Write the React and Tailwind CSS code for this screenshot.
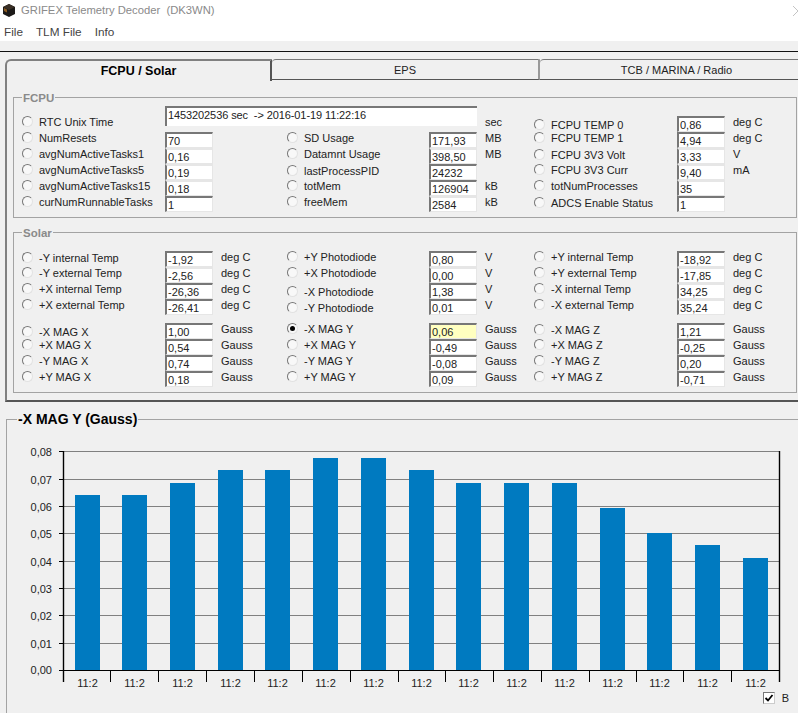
import React from 'react';

const bars = [
  [75, 495], [122, 495], [170, 483], [218, 470], [265, 470],
  [313, 458], [361, 458], [409, 470], [456, 483], [504, 483],
  [552, 483], [600, 508], [647, 533], [695, 545], [743, 558],
];
const gridY = [451.5, 479.5, 506.5, 533.5, 561.5, 588.5, 615.5, 643.5];
const ticksX = [63, 110, 158, 206, 254, 302, 350, 398, 445, 493, 541, 589, 636, 683, 731, 779];

const fcpu1 = [
  { label: 'NumResets', value: '70' },
  { label: 'avgNumActiveTasks1', value: '0,16', flat: true },
  { label: 'avgNumActiveTasks5', value: '0,19', flat: true },
  { label: 'avgNumActiveTasks15', value: '0,18', flat: true },
  { label: 'curNumRunnableTasks', value: '1' },
];
const fcpu2 = [
  { label: 'SD Usage', value: '171,93', unit: 'MB' },
  { label: 'Datamnt Usage', value: '398,50', unit: 'MB', flat: true },
  { label: 'lastProcessPID', value: '24232', shift: 'mt-px' },
  { label: 'totMem', value: '126904', unit: 'kB' },
  { label: 'freeMem', value: '2584', unit: 'kB', flat: true },
];
const fcpu3 = [
  { label: 'FCPU TEMP 0', value: '0,86', unit: 'deg C', shift: 'mt-[3px]' },
  { label: 'FCPU TEMP 1', value: '4,94', unit: 'deg C' },
  { label: 'FCPU 3V3 Volt', value: '3,33', unit: 'V', shift: 'mt-px', flat: true },
  { label: 'FCPU 3V3 Curr', value: '9,40', unit: 'mA', flat: true },
  { label: 'totNumProcesses', value: '35', flat: true },
  { label: 'ADCS Enable Status', value: '1', shift: 'mt-px' },
];

const temp1 = [
  { label: '-Y internal Temp', value: '-1,92', unit: 'deg C', shift: 'mt-px' },
  { label: '-Y external Temp', value: '-2,56', unit: 'deg C', flat: true },
  { label: '+X internal Temp', value: '-26,36', unit: 'deg C' },
  { label: '+X external Temp', value: '-26,41', unit: 'deg C' },
];
const temp2 = [
  { label: '+Y Photodiode', value: '0,80', unit: 'V' },
  { label: '+X Photodiode', value: '0,00', unit: 'V', flat: true },
  { label: '-X Photodiode', value: '1,38', unit: 'V', shift: 'mt-[3px]' },
  { label: '-Y Photodiode', value: '0,01', unit: 'V', shift: 'mt-[3px]' },
];
const temp3 = [
  { label: '+Y internal Temp', value: '-18,92', unit: 'deg C' },
  { label: '+Y external Temp', value: '-17,85', unit: 'deg C', flat: true },
  { label: '-X internal Temp', value: '34,25', unit: 'deg C', flat: true },
  { label: '-X external Temp', value: '35,24', unit: 'deg C', flat: true },
];
const mag1 = [
  { label: '-X MAG X', value: '1,00', unit: 'Gauss', shift: 'mt-[3px]' },
  { label: '+X MAG X', value: '0,54', unit: 'Gauss' },
  { label: '-Y MAG X', value: '0,74', unit: 'Gauss' },
  { label: '+Y MAG X', value: '0,18', unit: 'Gauss' },
];
const mag2 = [
  { label: '-X MAG Y', value: '0,06', unit: 'Gauss', checked: true, active: true },
  { label: '+X MAG Y', value: '-0,49', unit: 'Gauss' },
  { label: '-Y MAG Y', value: '-0,08', unit: 'Gauss' },
  { label: '+Y MAG Y', value: '0,09', unit: 'Gauss' },
];
const mag3 = [
  { label: '-X MAG Z', value: '1,21', unit: 'Gauss', shift: 'mt-px' },
  { label: '+X MAG Z', value: '-0,25', unit: 'Gauss' },
  { label: '-Y MAG Z', value: '0,20', unit: 'Gauss' },
  { label: '+Y MAG Z', value: '-0,71', unit: 'Gauss' },
];

const Radio = ({ checked }) => (
  <span className="w-[11px] h-[11px] shrink-0 rounded-full bg-[#f8f8f8] border border-t-[#777] border-l-[#777] border-r-[#e2e2e2] border-b-[#e2e2e2] flex items-center justify-center -translate-y-px">
    {checked && <span className="w-[5px] h-[5px] rounded-full bg-black" />}
  </span>
);

const Choice = ({ label, checked, shift, width }) => (
  <div className={`${width} shrink-0`}>
    <div className={`h-3 flex items-center gap-[6px] ${shift || ''}`}>
      <Radio checked={checked} />
      <span className="leading-[14px] whitespace-nowrap">{label}</span>
    </div>
  </div>
);

const Field = ({ label, value, unit, flat, shift, checked, active, width = 'w-[143px]' }) => (
  <div className="flex h-4">
    <Choice label={label} checked={checked} shift={shift} width={width} />
    <div className={`w-12 h-4 shrink-0 overflow-hidden border-l-2 border-t-2 border-r border-b border-l-[#777] border-r-[#e6e6e6] border-b-[#e6e6e6] leading-[14px] pl-px ${flat ? 'border-t-[#e6e6e6]' : 'border-t-[#777]'} ${active ? 'bg-[#ffffc0]' : 'bg-white'}`}>
      {value}
    </div>
    {unit && <span className="ml-2 leading-[13px]">{unit}</span>}
  </div>
);

const Group = ({ title, className, children }) => (
  <div className={`relative border border-[#a3a3a3] ${className}`}>
    <span className="absolute left-2 -top-2 px-px bg-[#f0f0f0] font-bold text-[11.5px] leading-4 text-[#8a8a8a]">{title}</span>
    {children}
  </div>
);

const Column = ({ rows, width, labelWidth }) => (
  <div className={`${width} shrink-0`}>
    {rows.map((r) => <Field key={r.label} {...r} width={labelWidth} />)}
  </div>
);

const Chart = () => (
  <svg width="791" height="250" viewBox="7 440 791 250" className="block font-['Liberation_Sans']">
    {gridY.map((y) => (
      <g key={y}>
        <line x1="63" x2="779" y1={y} y2={y} stroke="#808080" />
        <line x1="59" x2="64" y1={y} y2={y} stroke="#000" />
      </g>
    ))}
    {bars.map(([x, top], i) => (
      <g key={i}>
        <rect x={x} y={top} width="25" height={670 - top} fill="#007ac0" />
        <text x={x + 12.5} y="687" textAnchor="middle" fontSize="11" fill="#222">11:2</text>
      </g>
    ))}
    {['0,08', '0,07', '0,06', '0,05', '0,04', '0,03', '0,02', '0,01'].map((t, i) => (
      <text key={t} x="52" y={gridY[i] + 4} textAnchor="end" fontSize="11" fill="#222">{t}</text>
    ))}
    <text x="52" y="674" textAnchor="end" fontSize="11" fill="#222">0,00</text>
    <line x1="59" x2="779" y1="670.5" y2="670.5" stroke="#000" />
    <line x1="63.5" x2="63.5" y1="451" y2="682" stroke="#000" strokeWidth="1.4" />
    <line x1="779.5" x2="779.5" y1="451" y2="682" stroke="#000" strokeWidth="1.4" />
    {ticksX.map((x) => (
      <line key={x} x1={x + 0.5} x2={x + 0.5} y1="670" y2="682" stroke="#000" />
    ))}
  </svg>
);

const App = () => {
  return (
    <div className="h-[713px] overflow-hidden bg-[#f0f0f0] font-['Liberation_Sans'] text-[11px] text-[#222]">
      <div className="h-[41px] bg-white">
        <div className="h-[21px] flex items-center relative">
          <svg width="14" height="15" viewBox="0 0 14 15" className="ml-[2px] shrink-0">
            <path d="M7 1l6 3v7l-6 3-6-3V4z" fill="#1c1a18" />
            <path d="M7 1l6 3-6 3-6-3z" fill="#3a3026" />
            <path d="M2 5l3 1.5v3L2 8z" fill="#8a5a20" />
          </svg>
          <span className="ml-[5px] text-[11.25px] text-[#8a8a8a] whitespace-pre">GRIFEX Telemetry Decoder  (DK3WN)</span>
          <svg width="5" height="10" viewBox="0 0 5 10" className="ml-auto">
            <path d="M0 0l5 5-5 5" fill="none" stroke="#aaa" strokeWidth="0.7" />
          </svg>
        </div>
        <div className="flex gap-[13px] pl-1 pt-[5px] text-[11.75px] leading-3 text-[#444]">
          <span>File</span>
          <span>TLM File</span>
          <span>Info</span>
        </div>
      </div>

      <div className="mt-[10px] h-px bg-[#111]" />

      <div className="flex pl-[5px] pt-[7px] h-[29px]">
        <div className="w-[267px] h-[22px] border-l-2 border-t-2 border-r-2 border-l-[#808080] border-t-[#808080] border-r-[#555] rounded-tl-md text-center font-bold text-[12.5px] text-black leading-5 relative z-10">
          FCPU / Solar
        </div>
        <div className="w-[268px] h-[21px] border-t border-b border-r-2 border-t-[#777] border-b-[#555] border-r-[#999] text-center leading-5 rounded-tl-sm">EPS</div>
        <div className="flex-1 pl-[15px] h-[21px] border-t border-b border-t-[#777] border-b-[#555] text-center leading-5 rounded-tl-sm">TCB / MARINA / Radio</div>
      </div>

      <div className="ml-[5px] pl-[6px] pr-px pt-[16px] pb-[7px] border-l-2 border-b-2 border-l-[#808080] border-b-[#555]">
        <Group title="FCPU" className="pl-2 pt-2 pb-[5px] flex">
          <div className="w-[512px] shrink-0">
            <div className="flex h-[26px]">
              <Choice label="RTC Unix Time" width="w-[143px] pt-[10px]" />
              <div className="w-[312px] h-5 border-l-2 border-t-2 border-l-[#777] border-t-[#777] bg-white pl-px tracking-[-0.1px] leading-[14px] whitespace-pre">1453202536 sec  -&gt; 2016-01-19 11:22:16</div>
              <span className="ml-2 pt-[10px] leading-[13px]">sec</span>
            </div>
            <div className="flex">
              <Column rows={fcpu1} width="w-[265px]" />
              <Column rows={fcpu2} width="w-[247px]" labelWidth="w-[142px]" />
            </div>
          </div>
          <div className="pt-[10px]">
            <Column rows={fcpu3} width="w-[262px]" />
          </div>
        </Group>

        <Group title="Solar" className="mt-[14px] pl-2 pt-[18px] pb-[5px]">
          <div className="flex">
            <Column rows={temp1} width="w-[265px]" />
            <Column rows={temp2} width="w-[247px]" labelWidth="w-[142px]" />
            <Column rows={temp3} width="w-[262px]" />
          </div>
          <div className="flex mt-2">
            <Column rows={mag1} width="w-[265px]" />
            <Column rows={mag2} width="w-[247px]" labelWidth="w-[142px]" />
            <Column rows={mag3} width="w-[262px]" />
          </div>
        </Group>
      </div>

      <div className="relative mt-[17px] ml-[6px] h-[300px] border-l border-t border-[#a3a3a3]">
        <span className="absolute left-[10px] -top-[10px] px-px bg-[#f0f0f0] font-bold text-[14px] leading-[18px] text-black">-X MAG Y (Gauss)</span>
        <div className="pt-5">
          <Chart />
        </div>
        <div className="flex items-center justify-end gap-[7px] pr-[9px] mt-[2px]">
          <span className="w-3 h-3 bg-white border border-t-[#777] border-l-[#777] border-r-[#ccc] border-b-[#ccc] flex items-center justify-center">
            <svg width="10" height="10" viewBox="0 0 10 10">
              <path d="M1.5 5l2.5 2.5L8.5 2" fill="none" stroke="#000" strokeWidth="1.8" />
            </svg>
          </span>
          <span className="leading-3">B</span>
        </div>
      </div>
    </div>
  );
};

export default App;
